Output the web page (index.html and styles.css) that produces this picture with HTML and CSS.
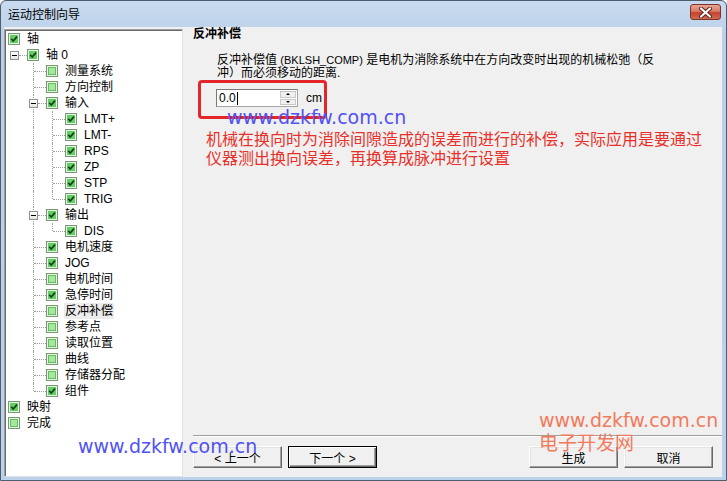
FILE: index.html
```html
<!DOCTYPE html>
<html lang="zh-CN">
<head>
    <meta charset="UTF-8">
    <title>运动控制向导</title>
    <link rel="stylesheet" href="styles.css">
</head>
<body>
    <div class="window">
        <div class="titlebar">
            <span class="title">运动控制向导</span>
            <span class="close">
                <svg width="15" height="11" viewBox="0 0 15 11">
                    <path d="M3 1.5 L12 9.5 M12 1.5 L3 9.5" stroke="#5a1e14" stroke-width="4" stroke-linecap="round"/>
                    <path d="M3 1.5 L12 9.5 M12 1.5 L3 9.5" stroke="#fff" stroke-width="2.2" stroke-linecap="round"/>
                </svg>
            </span>
        </div>

        <div class="client">
            <div class="tree">
                <div class="row"><span class="cb on"></span><span class="lbl">轴</span></div>
                <div class="row"><span class="c e"></span><span class="cb on"></span><span class="lbl">轴 0</span></div>
                <div class="row"><span class="c"></span><span class="c t"></span><span class="cb"></span><span class="lbl">测量系统</span></div>
                <div class="row"><span class="c"></span><span class="c t"></span><span class="cb"></span><span class="lbl">方向控制</span></div>
                <div class="row"><span class="c"></span><span class="c e pass"></span><span class="cb on"></span><span class="lbl">输入</span></div>
                <div class="row"><span class="c"></span><span class="c i"></span><span class="c t"></span><span class="cb on"></span><span class="lbl">LMT+</span></div>
                <div class="row"><span class="c"></span><span class="c i"></span><span class="c t"></span><span class="cb on"></span><span class="lbl">LMT-</span></div>
                <div class="row"><span class="c"></span><span class="c i"></span><span class="c t"></span><span class="cb on"></span><span class="lbl">RPS</span></div>
                <div class="row"><span class="c"></span><span class="c i"></span><span class="c t"></span><span class="cb on"></span><span class="lbl">ZP</span></div>
                <div class="row"><span class="c"></span><span class="c i"></span><span class="c t"></span><span class="cb on"></span><span class="lbl">STP</span></div>
                <div class="row"><span class="c"></span><span class="c i"></span><span class="c l"></span><span class="cb on"></span><span class="lbl">TRIG</span></div>
                <div class="row"><span class="c"></span><span class="c e pass"></span><span class="cb on"></span><span class="lbl">输出</span></div>
                <div class="row"><span class="c"></span><span class="c i"></span><span class="c l"></span><span class="cb on"></span><span class="lbl">DIS</span></div>
                <div class="row"><span class="c"></span><span class="c t"></span><span class="cb on"></span><span class="lbl">电机速度</span></div>
                <div class="row"><span class="c"></span><span class="c t"></span><span class="cb on"></span><span class="lbl">JOG</span></div>
                <div class="row"><span class="c"></span><span class="c t"></span><span class="cb"></span><span class="lbl">电机时间</span></div>
                <div class="row"><span class="c"></span><span class="c t"></span><span class="cb on"></span><span class="lbl">急停时间</span></div>
                <div class="row"><span class="c"></span><span class="c t"></span><span class="cb"></span><span class="lbl selected">反冲补偿</span></div>
                <div class="row"><span class="c"></span><span class="c t"></span><span class="cb"></span><span class="lbl">参考点</span></div>
                <div class="row"><span class="c"></span><span class="c t"></span><span class="cb"></span><span class="lbl">读取位置</span></div>
                <div class="row"><span class="c"></span><span class="c t"></span><span class="cb"></span><span class="lbl">曲线</span></div>
                <div class="row"><span class="c"></span><span class="c t"></span><span class="cb"></span><span class="lbl">存储器分配</span></div>
                <div class="row"><span class="c"></span><span class="c l"></span><span class="cb on"></span><span class="lbl">组件</span></div>
                <div class="row"><span class="cb on"></span><span class="lbl">映射</span></div>
                <div class="row"><span class="cb"></span><span class="lbl">完成</span></div>
            </div>

            <div class="page">
                <div class="heading">反冲补偿</div>
                <p class="desc">反冲补偿值 <span class="latin">(BKLSH_COMP)</span> 是电机为消除系统中在方向改变时出现的机械松弛（反<br>冲）而必须移动的距离.</p>

                <div class="mark-box">
                    <div class="spin">
                        <span class="edit">0.0<i class="caret"></i></span>
                        <span class="spin-btns">
                            <b class="arrow up"></b>
                            <b class="arrow down"></b>
                        </span>
                    </div>
                    <span class="unit">cm</span>
                </div>

                <p class="note">机械在换向时为消除间隙造成的误差而进行的补偿，实际应用是要通过<br>仪器测出换向误差，再换算成脉冲进行设置</p>

                <div class="footer">
                    <div class="sep"></div>
                    <div class="buttons">
                        <button class="btn">&lt; 上一个</button>
                        <button class="btn default">下一个 &gt;</button>
                        <span class="spacer"></span>
                        <button class="btn">生成</button>
                        <button class="btn">取消</button>
                    </div>
                </div>
            </div>
        </div>

        <!-- watermarks laid over the window -->
        <div class="wm blue wm-top">www.dzkfw.com.cn</div>
        <div class="wm blue wm-bottom">www.dzkfw.com.cn</div>
        <div class="wm orange wm-corner">
            <div>www.dzkfw.com.cn</div>
            <div class="wm-cn">电子开发网</div>
        </div>
    </div>
</body>
</html>
```

FILE: styles.css
```css
body {
    margin: 0;
    font-family: "Liberation Sans", "Noto Sans CJK SC", sans-serif;
    font-size: 12px;
    color: #000;
}
.window {
    position: relative;
    height: 481px;
    box-sizing: border-box;
    display: flex;
    flex-direction: column;
    border: 1px solid #4e5d6d;
    border-radius: 6px 6px 0 0;
    background: linear-gradient(#c8daef, #bad0e8 40px, #bcd2ea);
}
.titlebar {
    height: 26px;
    display: flex;
    align-items: center;
    padding-left: 7px;
    flex-shrink: 0;
}
.title {
    flex: 1;
    font-size: 12px;
    line-height: 14px;
    padding-top: 1px;
}
.close {
    width: 31px;
    height: 16px;
    margin: -4px 5px 0 0;
    box-sizing: border-box;
    border: 1px solid #7a3326;
    border-radius: 3px;
    background: linear-gradient(#e7a593, #d77a66 45%, #c4432d 55%, #cf6a55);
    display: flex;
    align-items: center;
    justify-content: center;
}
.client {
    flex: 1;
    display: flex;
    margin: 0 4px 3px 3px;
    background: #f0f0f0;
    min-height: 0;
}

/* tree */
.tree {
    width: 179px;
    box-sizing: border-box;
    margin-top: 2px;
    padding: 1px 0 0 3px;
    background: #fff;
    border: 1px solid #a0a0a0;
    border-right-color: #e3e3e3;
    border-bottom-color: #e3e3e3;
    box-shadow: inset 1px 1px 0 #696969, inset -1px -1px 0 #fff;
}
.row {
    height: 16px;
    display: flex;
    align-items: center;
}
.c {
    width: 19px;
    height: 16px;
    flex-shrink: 0;
    position: relative;
}
.c.i::before,
.c.t::before,
.c.l::before {
    content: "";
    position: absolute;
    left: 6px;
    top: 0;
    height: 16px;
    border-left: 1px dotted #a0a0a0;
}
.c.l::before {
    height: 8px;
}
.c.t::after,
.c.l::after,
.c.e::after {
    content: "";
    position: absolute;
    left: 7px;
    top: 8px;
    width: 12px;
    border-top: 1px dotted #a0a0a0;
}
/* expander box with a minus sign */
.c.e::before {
    content: "";
    position: absolute;
    left: 2px;
    top: 4px;
    width: 7px;
    height: 7px;
    border: 1px solid #919191;
    background: linear-gradient(#000, #000) center / 5px 1px no-repeat, linear-gradient(#fff, #e6e6e6);
    z-index: 1;
}
.c.e::after {
    left: 11px;
    width: 8px;
}
.c.e.pass {
    background: repeating-linear-gradient(#a0a0a0 0 1px, transparent 1px 2px) 6px 0 / 1px 16px no-repeat;
}
.cb {
    width: 12px;
    height: 12px;
    box-sizing: border-box;
    flex-shrink: 0;
    margin-right: 7px;
    border: 1px solid #7a977a;
    background: #a8e6a0;
    box-shadow: inset 0 0 0 1px #e4f6e2, inset 0 0 0 2px #5fbf5f;
}
.cb.on {
    background: #63cf63 url("data:image/svg+xml;utf8,<svg xmlns='http://www.w3.org/2000/svg' width='10' height='10'><path d='M2.2 4.8 L4.2 7 L8 2.6' fill='none' stroke='%23173f17' stroke-width='1.7'/></svg>") center / 10px 10px no-repeat;
    box-shadow: inset 0 0 0 1px #e4f6e2;
}
.lbl {
    line-height: 16px;
    white-space: nowrap;
    padding: 0 1px;
    margin-left: -1px;
}
.lbl.selected {
    background: #ececec;
}

/* right page */
.page {
    flex: 1;
    display: flex;
    flex-direction: column;
    padding: 1px 9px 9px 10px;
}
.heading {
    font-weight: bold;
    line-height: 13px;
}
.desc {
    margin: 13px 0 0 24px;
    line-height: 13px;
    white-space: nowrap;
}
.latin {
    font-size: 11px;
}
.mark-box {
    width: 129px;
    box-sizing: border-box;
    margin-left: 5px;
    padding: 6px 0 9px 15px;
    border: 3px solid #e3262a;
    border-radius: 4px;
    display: flex;
    align-items: center;
}
.spin {
    width: 82px;
    height: 18px;
    box-sizing: border-box;
    display: flex;
    background: #fff;
    border: 1px solid #a5a5a5;
    border-top-color: #7a7a7a;
    border-left-color: #7a7a7a;
}
.edit {
    flex: 1;
    padding-left: 2px;
    line-height: 16px;
    display: flex;
    align-items: center;
}
.caret {
    width: 1px;
    height: 13px;
    margin-left: 1px;
    background: #000;
}
.spin-btns {
    width: 16px;
    display: flex;
    flex-direction: column;
    gap: 1px;
    padding: 1px 1px 1px 0;
}
.arrow {
    flex: 1;
    background: #f0f0f0;
    border: 1px solid #c8c8c8;
    display: flex;
    align-items: center;
    justify-content: center;
}
.arrow::after {
    content: "";
    border-left: 2px solid transparent;
    border-right: 2px solid transparent;
}
.arrow.up::after {
    border-bottom: 2px solid #000;
}
.arrow.down::after {
    border-top: 2px solid #000;
}
.unit {
    margin-left: 8px;
}
.note {
    margin: 10px 0 0 13px;
    font-family: "Noto Sans CJK SC", sans-serif;
    font-size: 16px;
    line-height: 19px;
    color: #e8302a;
    white-space: nowrap;
}
.footer {
    margin-top: auto;
}
.sep {
    border-top: 1px solid #a0a0a0;
    border-bottom: 1px solid #fff;
    margin-right: -9px;
}
.buttons {
    display: flex;
    gap: 6px;
    margin-top: 9px;
}
.spacer {
    flex: 1;
}
.btn {
    width: 89px;
    height: 22px;
    box-sizing: border-box;
    padding: 0;
    font-family: "Liberation Sans", "Noto Sans CJK SC", sans-serif;
    font-size: 12px;
    background: #f0f0f0;
    border: 1px solid;
    border-color: #fff #696969 #696969 #fff;
    box-shadow: inset -1px -1px 0 #a0a0a0, inset 1px 1px 0 #e3e3e3;
}
.btn.default {
    border-color: #000;
    box-shadow: inset 1px 1px 0 #fff, inset -1px -1px 0 #696969, inset -2px -2px 0 #a0a0a0;
}

/* watermarks */
.wm {
    position: absolute;
    font-family: "DejaVu Sans", "Noto Sans CJK SC", sans-serif;
    font-size: 19px;
    line-height: 19px;
    white-space: nowrap;
}
.blue {
    color: #5252f2;
}
.orange {
    color: #f27a5c;
}
.wm-top {
    left: 226px;
    top: 107px;
}
.wm-bottom {
    left: 77px;
    top: 436px;
}
.wm-corner {
    left: 538px;
    top: 410px;
}
.wm-cn {
    font-family: "Noto Sans CJK SC", sans-serif;
    margin-top: 2px;
}
```
